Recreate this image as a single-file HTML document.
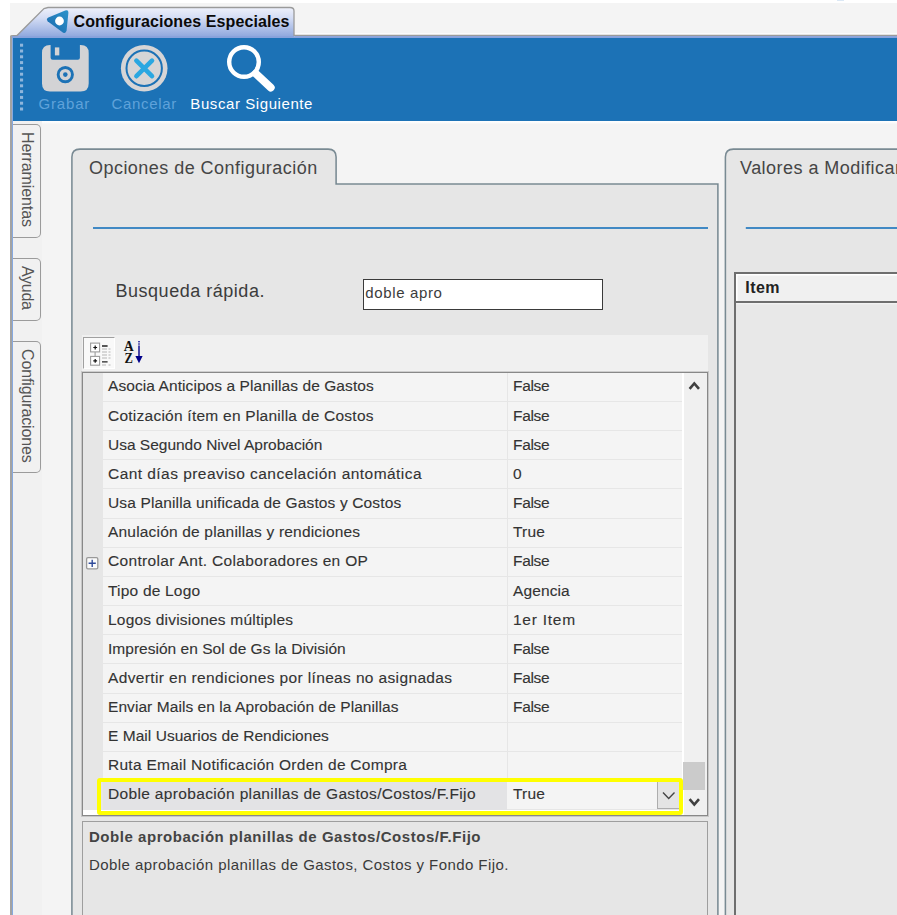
<!DOCTYPE html>
<html><head><meta charset="utf-8">
<style>
html,body{margin:0;padding:0;}
body{width:897px;height:915px;overflow:hidden;background:#fff;position:relative;font-family:"Liberation Sans",sans-serif;color:#333;}
.abs{position:absolute;}
#win{left:10px;top:3px;width:887px;height:912px;background:#f4f4f4;}
#tbar{left:10px;top:38px;width:887px;height:82.5px;background:#1c72b6;}
.tl{position:absolute;font-size:15px;line-height:16px;white-space:pre;}
.row{position:absolute;left:103px;width:578.9px;height:29.16px;background:#f4f4f4;box-sizing:border-box;border-bottom:1px solid #e6e6e6;font-size:15.5px;line-height:29px;white-space:pre;-webkit-text-stroke:0.12px #333;}
.row .n{position:absolute;left:5px;top:-1.4px;}
.row.sel .n{left:0;padding-left:5px;width:399px;height:29.2px;background:#e3e3e5;top:0;line-height:26.2px}
.row.sel:after{display:none}
.row.sel .v{top:-1.6px}
.row .v{position:absolute;left:410px;top:-1.4px;}
.row:after{content:"";position:absolute;left:404px;top:0;width:1px;height:100%;background:#e6e6e6;}
</style></head><body>
<div class="abs" id="win"></div>
<div class="abs" style="left:837px;top:0;width:7px;height:1px;background:#dbe8f5"></div>

<!-- top tab -->
<svg class="abs" style="left:0;top:0" width="897" height="40" viewBox="0 0 897 40">
<defs><linearGradient id="tg" x1="0" y1="0" x2="0" y2="1"><stop offset="0" stop-color="#eef1fb"/><stop offset="0.35" stop-color="#d3dcf4"/><stop offset="1" stop-color="#8aa4dc"/></linearGradient></defs>
<rect x="295" y="33" width="602" height="3" fill="#fbfbfb"/>
<path d="M12 38 L12 36 L17 35.5 L44 8.5 L48 7.5 L290 7.5 Q294 7.5 294 11 L294 38 Z" fill="url(#tg)"/>
<path d="M10.5 36 L17 35.5 L44 8.5 L48 7.5 L290 7.5 Q294 7.5 294 11 L294 35.5 L897 35.5" fill="none" stroke="#9a9a9a" stroke-width="1.3"/>
<rect x="12" y="36.3" width="885" height="1.7" fill="#86a2dc"/>
<rect x="295" y="36.3" width="602" height="1.7" fill="#86a2dc"/>
</svg>
<div class="abs" style="left:73.5px;top:11.5px;font-size:16px;line-height:20px;font-weight:700;color:#0a0a0a;letter-spacing:0.1px;white-space:pre">Configuraciones Especiales</div>
<svg class="abs" style="left:44px;top:6px" width="28" height="30" viewBox="44 6 28 30">
<defs><linearGradient id="lg" x1="0" y1="1" x2="1" y2="0"><stop offset="0" stop-color="#1a69ad"/><stop offset="1" stop-color="#2c93cb"/></linearGradient></defs>
<path d="M47.6 21.3 Q45.8 19 48.4 17.6 L65.2 10.6 Q68.6 9.6 68.4 12.8 L66.6 30.6 Q65.8 34.2 62.8 32.4 Z" fill="url(#lg)"/>
<circle cx="59.5" cy="21" r="4.4" fill="#fff"/>
</svg>

<!-- toolbar -->
<div class="abs" id="tbar"></div>
<div class="abs" style="left:10px;top:36px;width:2px;height:879px;background:#a3a3a3"></div>
<div class="abs" style="left:12px;top:38px;width:1.2px;height:877px;background:#86a9e0"></div>
<svg class="abs" style="left:18px;top:40px" width="8" height="76" viewBox="0 0 8 76">
<g fill="#8fb6dc">
<rect x="2" y="3.7" width="3.1" height="3"/><rect x="2" y="9.5" width="3.1" height="3"/><rect x="2" y="15.3" width="3.1" height="3"/><rect x="2" y="21.1" width="3.1" height="3"/><rect x="2" y="26.9" width="3.1" height="3"/><rect x="2" y="32.7" width="3.1" height="3"/><rect x="2" y="38.5" width="3.1" height="3"/><rect x="2" y="44.3" width="3.1" height="3"/><rect x="2" y="50.1" width="3.1" height="3"/><rect x="2" y="55.9" width="3.1" height="3"/><rect x="2" y="61.7" width="3.1" height="3"/><rect x="2" y="67.5" width="3.1" height="3"/>
</g></svg>
<!-- grabar icon -->
<svg class="abs" style="left:40px;top:43px" width="52" height="52" viewBox="0 0 52 52">
<path d="M10 1.9 L10.6 1.9 L10.6 14.7 Q10.6 16.7 12.6 16.7 L37.9 16.7 Q39.9 16.7 39.9 14.7 L39.9 1.9 L40.7 1.9 Q48.7 1.9 48.7 9.9 L48.7 40.6 Q48.7 48.6 40.7 48.6 L10 48.6 Q2 48.6 2 40.6 L2 9.9 Q2 1.9 10 1.9 Z" fill="#d3d3d5"/>
<rect x="14.9" y="4.4" width="4.4" height="8" fill="#d3d3d5"/>
<circle cx="25.3" cy="31.6" r="7.15" fill="none" stroke="#1c72b6" stroke-width="2.9"/>
<circle cx="25.3" cy="31.6" r="2.3" fill="#1c72b6"/>
</svg>
<!-- cancelar icon -->
<svg class="abs" style="left:118px;top:43px" width="52" height="52" viewBox="0 0 52 52">
<circle cx="26.2" cy="25.3" r="23.3" fill="#d6d5d6"/>
<circle cx="26.2" cy="25.3" r="17.7" fill="none" stroke="#1c72b6" stroke-width="2"/>
<path d="M18.4 17.6 L34 33.2 M34 17.6 L18.4 33.2" stroke="#2aa7e1" stroke-width="4.6" stroke-linecap="round" fill="none"/>
</svg>
<!-- search icon -->
<svg class="abs" style="left:222px;top:43px" width="60" height="52" viewBox="0 0 60 52">
<circle cx="22" cy="19" r="14.8" fill="none" stroke="#fff" stroke-width="4.4"/>
<path d="M33.8 30.6 L48.8 44.6" stroke="#fff" stroke-width="7.8" stroke-linecap="round"/>
</svg>
<div class="tl" style="left:38.6px;top:95.5px;color:#5fa2da;letter-spacing:0.8px">Grabar</div>
<div class="tl" style="left:111.5px;top:95.5px;color:#5fa2da;letter-spacing:0.68px">Cancelar</div>
<div class="tl" style="left:190.3px;top:95.5px;color:#fff;letter-spacing:0.58px">Buscar Siguiente</div>

<!-- side tabs -->
<div class="abs" style="left:13px;top:120.5px;width:884px;height:3.5px;background:linear-gradient(#fff,#fbfbfb 60%,#f4f4f4)"></div>
<div class="abs" style="left:13px;top:120.5px;width:29px;height:795px;background:#f1f1f1"></div>
<div class="abs stab" style="top:124px;height:112px"><span style="letter-spacing:-0.1px;top:7px">Herramientas</span></div>
<div class="abs stab" style="top:257.6px;height:61.6px"><span style="letter-spacing:-0.27px;top:7.5px">Ayuda</span></div>
<div class="abs stab" style="top:341.4px;height:130px"><span style="letter-spacing:-0.13px;top:7px">Configuraciones</span></div>
<style>
.stab{left:13px;width:26.6px;border:1px solid #9b9b9b;border-left:none;border-radius:0 5px 5px 0;background:#f1f1f1;box-sizing:content-box;}
.stab span{position:absolute;left:13.7px;top:8px;font-size:16px;line-height:16px;white-space:pre;transform-origin:0 0;transform:rotate(90deg) translate(0,-50%);color:#555;}
</style>

<!-- left panel -->
<svg class="abs" style="left:60px;top:140px" width="837" height="775" viewBox="60 140 837 775">
<path d="M71.9 915 L71.9 157.1 Q71.9 149.1 79.9 149.1 L328.1 149.1 Q336.1 149.1 336.1 157.1 L336.1 184 L717.9 184 L717.9 915 Z" fill="#e6e6e6"/>
<path d="M71.9 915 L71.9 157.1 Q71.9 149.1 79.9 149.1 L328.1 149.1 Q336.1 149.1 336.1 157.1 L336.1 184 L717.9 184 L717.9 915" fill="none" stroke="#798a93" stroke-width="1.55"/>
<path d="M725.4 915 L725.4 157.1 Q725.4 149.1 733.4 149.1 L897 149.1 L897 915 Z" fill="#e6e6e6"/>
<path d="M725.4 915 L725.4 157.1 Q725.4 149.1 733.4 149.1 L897 149.1" fill="none" stroke="#798a93" stroke-width="1.55"/>
<rect x="93" y="227.1" width="615" height="1.8" fill="#2f7fc0"/>
<rect x="745.8" y="227.1" width="152" height="1.8" fill="#2f7fc0"/>
</svg>
<div class="abs" style="left:89px;top:157px;font-size:18px;line-height:22px;letter-spacing:0.46px;color:#454545;white-space:pre">Opciones de Configuración</div>
<div class="abs" style="left:740px;top:157px;font-size:18px;line-height:22px;letter-spacing:0.46px;color:#454545;white-space:pre">Valores a Modificar</div>
<div class="abs" style="left:115.5px;top:280px;font-size:18px;line-height:22px;letter-spacing:0.52px;color:#3c3c3c;white-space:pre">Busqueda rápida.</div>
<div class="abs" style="left:362.5px;top:279px;width:240.5px;height:31px;box-sizing:border-box;border:1.3px solid #3a3a3a;background:#fff"></div>
<div class="abs" style="left:365.2px;top:284.3px;font-size:15px;line-height:18px;letter-spacing:0.65px;color:#3c3c3c;white-space:pre">doble apro</div>

<!-- property grid toolbar -->
<div class="abs" style="left:82px;top:335px;width:626px;height:37px;background:#f0f0f0"></div>
<div class="abs" style="left:83px;top:337px;width:32px;height:31.5px;box-sizing:border-box;background:#f9f9f9;border-top:1.3px solid #a0a0a0;border-left:1.3px solid #a0a0a0;border-right:1px solid #fff;border-bottom:1px solid #fff"></div>
<svg class="abs" style="left:86px;top:339px" width="62" height="30" viewBox="86 339 62 30">
<g fill="none" stroke="#9c9c9c" stroke-width="1.1">
<rect x="90.6" y="343.1" width="9" height="8.8" fill="#fff"/><rect x="90.6" y="356.4" width="9" height="8.8" fill="#fff"/><path d="M95.1 352 L95.1 356.4"/>
</g>
<g stroke="#111" stroke-width="1.2"><path d="M93.3 347.5 h3.8 M95.2 345.6 v3.8 M93.3 360.8 h3.8 M95.2 358.9 v3.8"/></g>
<g stroke="#222" stroke-width="1.3"><path d="M102 346 h5.6 M102 361.8 h5.6"/></g>
<g stroke="#b5b5b5" stroke-width="1"><path d="M102 349 h5 M108.5 349 h2 M102 352 h5 M108.5 352 h2 M102 355 h5 M108.5 355 h2 M102 358 h5 M108.5 358 h2 M102 365 h4 M108.5 365 h2"/></g>
<text x="123.8" y="351" font-family="Liberation Serif" font-weight="700" font-size="15" fill="#111" textLength="10" lengthAdjust="spacingAndGlyphs">A</text>
<text x="124.6" y="362.9" font-family="Liberation Serif" font-weight="700" font-size="14.5" fill="#111" textLength="8.4" lengthAdjust="spacingAndGlyphs">Z</text>
<path d="M139 345.5 L139 358" stroke="#00008b" stroke-width="1.4"/>
<rect x="138.3" y="341" width="1.4" height="1.4" fill="#00008b"/><rect x="138.3" y="343.3" width="1.4" height="1.4" fill="#00008b"/>
<path d="M135.4 356 L142.6 356 L139 363.3 Z" fill="#00008b"/>
</svg>

<!-- property grid -->
<div class="abs" style="left:81.6px;top:371.8px;width:626.4px;height:444.6px;box-sizing:border-box;border:1px solid #888;outline:1px solid rgba(120,120,120,0.28);background:#fff"></div>
<div class="abs" style="left:82.8px;top:372.5px;width:20.3px;height:437.7px;background:#e6e6e6"></div>
<div class="row" style="top:372.80px"><span class="n" style="letter-spacing:0.080px">Asocia Anticipos a Planillas de Gastos</span><span class="v" style="letter-spacing:-0.305px">False</span></div>
<div class="row" style="top:401.96px"><span class="n" style="letter-spacing:0.244px">Cotización ítem en Planilla de Costos</span><span class="v" style="letter-spacing:-0.305px">False</span></div>
<div class="row" style="top:431.12px"><span class="n" style="letter-spacing:-0.008px">Usa Segundo Nivel Aprobación</span><span class="v" style="letter-spacing:-0.305px">False</span></div>
<div class="row" style="top:460.28px"><span class="n" style="letter-spacing:0.450px">Cant días preaviso cancelación antomática</span><span class="v" style="letter-spacing:0.182px">0</span></div>
<div class="row" style="top:489.44px"><span class="n" style="letter-spacing:0.135px">Usa Planilla unificada de Gastos y Costos</span><span class="v" style="letter-spacing:-0.305px">False</span></div>
<div class="row" style="top:518.60px"><span class="n" style="letter-spacing:0.185px">Anulación de planillas y rendiciones</span><span class="v" style="letter-spacing:0.197px">True</span></div>
<div class="row" style="top:547.76px"><span class="n" style="letter-spacing:0.331px">Controlar Ant. Colaboradores en OP</span><span class="v" style="letter-spacing:-0.305px">False</span></div>
<div class="row" style="top:576.92px"><span class="n" style="letter-spacing:0.200px">Tipo de Logo</span><span class="v" style="letter-spacing:0.113px">Agencia</span></div>
<div class="row" style="top:606.08px"><span class="n" style="letter-spacing:0.200px">Logos divisiones múltiples</span><span class="v" style="letter-spacing:0.746px">1er Item</span></div>
<div class="row" style="top:635.24px"><span class="n" style="letter-spacing:0.022px">Impresión en Sol de Gs la División</span><span class="v" style="letter-spacing:-0.305px">False</span></div>
<div class="row" style="top:664.40px"><span class="n" style="letter-spacing:0.362px">Advertir en rendiciones por líneas no asignadas</span><span class="v" style="letter-spacing:-0.305px">False</span></div>
<div class="row" style="top:693.56px"><span class="n" style="letter-spacing:0.067px">Enviar Mails en la Aprobación de Planillas</span><span class="v" style="letter-spacing:-0.305px">False</span></div>
<div class="row" style="top:722.72px"><span class="n" style="letter-spacing:0.040px">E Mail Usuarios de Rendiciones</span><span class="v" style="letter-spacing:0.000px"></span></div>
<div class="row" style="top:751.88px"><span class="n" style="letter-spacing:0.269px">Ruta Email Notificación Orden de Compra</span><span class="v" style="letter-spacing:0.000px"></span></div>
<div class="row sel" style="top:781.04px"><span class="n" style="letter-spacing:0.344px">Doble aprobación planillas de Gastos/Costos/F.Fijo</span><span class="v" style="letter-spacing:0.197px">True</span></div>
<!-- expand box -->
<svg class="abs" style="left:84px;top:554px" width="18" height="18" viewBox="84 554 18 18"><rect x="86.6" y="557.7" width="11.2" height="11.1" rx="1.4" fill="#fbfbfb" stroke="#999" stroke-width="1.3"/><path d="M88.6 563.3 h7.2 M92.2 559.7 v7.2" stroke="#2f4a9a" stroke-width="1.4"/></svg>
<!-- scrollbar -->
<div class="abs" style="left:683.5px;top:373.3px;width:23px;height:441.6px;background:#f0f0f0"></div>
<div class="abs" style="left:683.4px;top:762.4px;width:21.5px;height:27.3px;background:#cbcbcb"></div>
<svg class="abs" style="left:682px;top:372px" width="26" height="445" viewBox="682 372 26 445">
<path d="M689.6 388.8 L694.3 383.4 L699 388.8" fill="none" stroke="#404040" stroke-width="2.6"/>
<path d="M689.6 799.2 L694.3 804.6 L699 799.2" fill="none" stroke="#404040" stroke-width="2.6"/>
</svg>
<!-- selected row extras -->
<div class="abs" style="left:657.1px;top:782px;width:22.4px;height:27px;box-sizing:border-box;background:#e4e4e4;border-left:1.3px solid #adadad;border-bottom:1.3px solid #adadad"></div>
<svg class="abs" style="left:657px;top:782px" width="24" height="28" viewBox="657 782 24 28"><path d="M663 792.6 L668.7 798.4 L674.5 792.6" fill="none" stroke="#444" stroke-width="1.4"/></svg>
<div class="abs" style="left:97.3px;top:778px;width:586.1px;height:36.5px;box-sizing:border-box;border:4.7px solid #ffff00;border-radius:3px"></div>

<!-- description -->
<div class="abs" style="left:81.5px;top:821.2px;width:626.3px;height:100px;box-sizing:border-box;border:1.4px solid #9e9e9e;background:#e6e6e6"></div>
<div class="abs" style="left:89px;top:827px;font-size:15px;line-height:20px;font-weight:700;color:#444;white-space:pre;letter-spacing:0.54px">Doble aprobación planillas de Gastos/Costos/F.Fijo</div>
<div class="abs" style="left:89px;top:855px;font-size:15px;line-height:20px;color:#3a3a3a;white-space:pre;letter-spacing:0.44px">Doble aprobación planillas de Gastos, Costos y Fondo Fijo.</div>

<!-- right grid -->
<div class="abs" style="left:734.2px;top:272px;width:170px;height:650px;background:#6e6e6e"></div>
<div class="abs" style="left:736.1px;top:274px;width:165px;height:27px;background:#f0f0f0;box-shadow:inset 1.5px 1.5px 0 #fff"></div>
<div class="abs" style="left:736.1px;top:302.9px;width:165px;height:620px;background:#e8e8e8;box-shadow:inset 0 1.2px 0 #f2f2f2"></div>
<div class="abs" style="left:745.2px;top:278.2px;font-size:16px;line-height:20px;font-weight:700;color:#222;white-space:pre;letter-spacing:0.5px">Item</div>
</body></html>
